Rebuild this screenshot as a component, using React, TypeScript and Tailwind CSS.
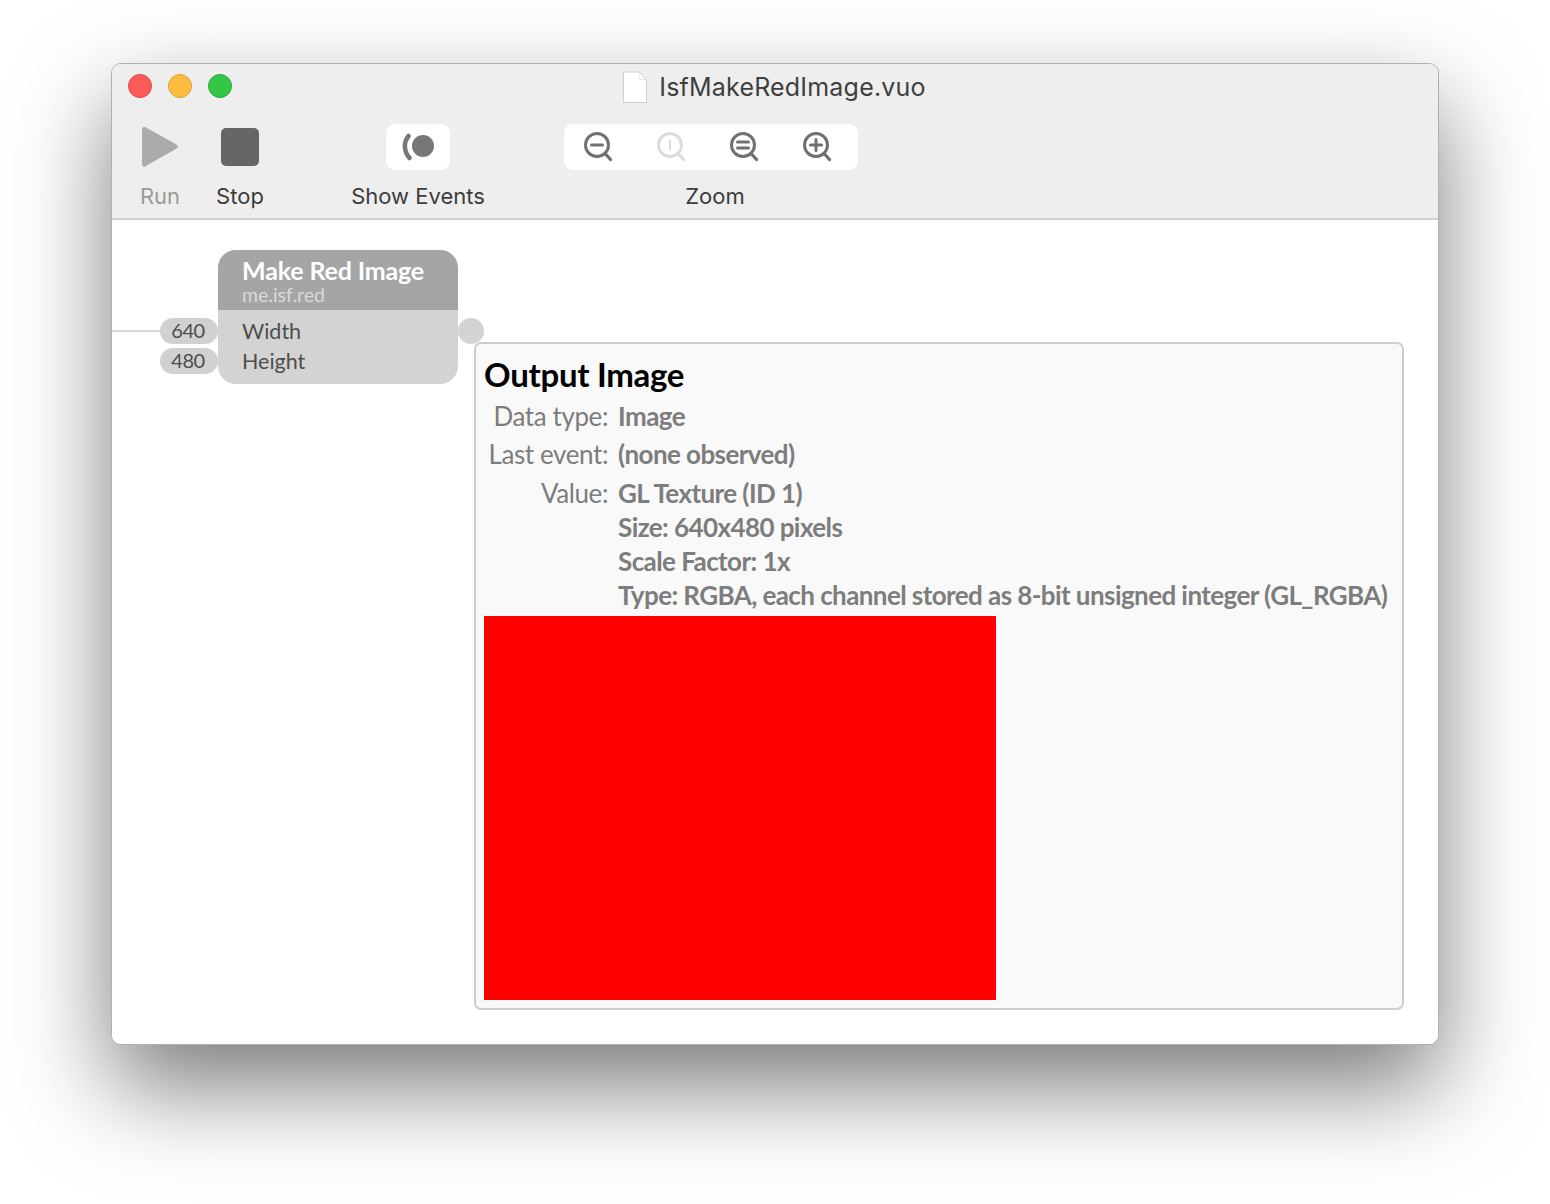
const PT = "font-['Lato','Noto_Sans',sans-serif]";

function Mag({ children, color = "#707070" }: { children?: React.ReactNode; color?: string }) {
  return (
    <svg width="32" height="34" viewBox="0 0 32 34" fill="none" stroke={color} strokeWidth="3" strokeLinecap="round">
      <circle cx="14" cy="14" r="11.5" />
      <path d="M23 23.5 L27.5 28.5" strokeWidth="3.2" />
      {children}
    </svg>
  );
}

function ToolItem({ w, label, dim, children, labelClass = "" }: { w: string; label: string; dim?: boolean; children: React.ReactNode; labelClass?: string }) {
  return (
    <div className={`flex flex-col items-center ${w}`}>
      <div className="h-[46px] w-full flex items-center justify-center">{children}</div>
      <div className={`mt-[13px] text-[22px] leading-[26px] whitespace-nowrap ${dim ? "text-[#9a9a9a]" : "text-[#3c3c3c]"} ${labelClass}`}>{label}</div>
    </div>
  );
}

function InfoRow({ label, children, h }: { label?: string; children: React.ReactNode; h: string }) {
  return (
    <div className={`flex items-center ${h} text-[26px] text-[#7d7d7d]`}>
      <div className="w-[124px] text-right whitespace-nowrap tracking-[-0.4px]">{label}</div>
      <div className="ml-[10px] font-bold whitespace-nowrap tracking-[-0.58px]">{children}</div>
    </div>
  );
}

export default function App() {
  return (
    <div className="min-h-[1204px] bg-white pt-[63px] pl-[111px] overflow-hidden font-['Inter','Roboto',sans-serif]">
      <div className="w-[1328px] h-[982px] rounded-[10px] border border-[#b0b0b0] bg-white overflow-hidden shadow-[0_42px_96px_rgba(0,0,0,0.52)] flex flex-col">
        <header className="h-[156px] shrink-0 bg-[#eeeeee] border-b-2 border-[#d2d2d2]">
          <div className="relative h-[45px] flex items-center justify-center">
            <div className="absolute left-[16px] top-[10px] flex gap-4">
              <span className="w-6 h-6 rounded-full bg-[#fc5b57] border border-[#e14640]" />
              <span className="w-6 h-6 rounded-full bg-[#fdbc40] border border-[#e0a030]" />
              <span className="w-6 h-6 rounded-full bg-[#33c748] border border-[#27aa35]" />
            </div>
            <div className="flex items-center gap-3 mr-[1px] mt-[1px]">
              <svg width="24" height="32" viewBox="0 0 24 32">
                <path d="M0.5 1 H16 L23.5 8.5 V31.5 H0.5 Z" fill="#ffffff" stroke="#cfcfcf" />
                <path d="M16 1 V8.5 H23.5" fill="none" stroke="#e6e6e6" />
              </svg>
              <span className="text-[25px] leading-[32px] text-[#3f3f3f] tracking-[0.2px]">IsfMakeRedImage.vuo</span>
            </div>
          </div>
          <div className="flex pl-[12px] pt-[15px] gap-2">
            <ToolItem w="w-[72px]" label="Run" dim>
              <svg width="40" height="44" viewBox="0 0 40 44">
                <path d="M5 2.5 L36.5 20 Q38.5 21.5 36.5 23 L5 41 Q2.5 42 2.5 39.5 V4.5 Q2.5 1.5 5 2.5 Z" fill="#ababab" stroke="#ababab" strokeLinejoin="round" />
              </svg>
            </ToolItem>
            <ToolItem w="w-[72px]" label="Stop">
              <div className="w-[38px] h-[38px] rounded-[5px] bg-[#666666]" />
            </ToolItem>
            <ToolItem w="w-[156px] ml-[56px]" label="Show Events">
              <div className="w-16 h-[46px] rounded-[9px] bg-white flex items-center justify-center">
                <svg width="34" height="28" viewBox="0 0 34 28">
                  <circle cx="22" cy="13" r="11" fill="#777777" />
                  <path d="M7.5 3 C2.5 9 2.5 18 8.5 25" fill="none" stroke="#777777" strokeWidth="4.5" strokeLinecap="round" />
                </svg>
              </div>
            </ToolItem>
            <ToolItem w="w-[294px] ml-[60px]" label="Zoom" labelClass="ml-2">
              <div className="w-full h-[46px] rounded-[9px] bg-white flex items-center pl-[19px] gap-[41px] pt-[1px]">
                <Mag><path d="M8.5 14 H19.5" /></Mag>
                <Mag color="#dcdcdc"><path d="M14 9.5 V18.5" strokeWidth="2" /></Mag>
                <Mag><path d="M8.5 11 H19.5 M8.5 17 H19.5" /></Mag>
                <Mag><path d="M8.5 14 H19.5 M14 8.5 V19.5" /></Mag>
              </div>
            </ToolItem>
          </div>
        </header>

        <main className={`relative flex-1 bg-white ${PT}`}>
          <div className="absolute left-0 top-[110px] w-[50px] h-[2px] bg-[#d6d6d6]" />
          <div className="absolute left-[48px] top-[98px] flex flex-col gap-1 text-[20px] tracking-[-0.4px] text-[#4d4d4d]">
            <div className="w-[58px] h-[26px] rounded-full bg-[#d1d1d1] flex items-center justify-center pr-[2px] pb-[2px]">640</div>
            <div className="w-[58px] h-[26px] rounded-full bg-[#d1d1d1] flex items-center justify-center pr-[2px] pb-[2px]">480</div>
          </div>
          <div className="absolute left-[106px] top-[30px] w-[240px] h-[134px] rounded-[18px] bg-[#d3d3d3] overflow-hidden">
            <div className="h-[60px] bg-[#a5a5a5] pl-6 pt-[5px] flex flex-col">
              <div className="text-[25px] leading-[30px] font-bold text-white whitespace-nowrap tracking-[-0.15px]">Make Red Image</div>
              <div className="text-[19.5px] leading-[19px] text-[#d9d9d9] whitespace-nowrap">me.isf.red</div>
            </div>
            <div className="pl-6 pt-[6px] text-[21.5px] text-[#4d4d4d] leading-[30px]">
              <div>Width</div>
              <div>Height</div>
            </div>
          </div>
          <div className="absolute left-[346px] top-[98px] w-[26px] h-[26px] rounded-full bg-[#d3d3d3]" />
          <section className="absolute left-[362px] top-[122px] w-[930px] h-[668px] rounded-[7px] border-2 border-[#cdcdcd] bg-[#f9f9f9] pl-[8px] pt-[10px]">
            <h2 className="text-[33px] leading-[40px] font-bold text-black whitespace-nowrap tracking-[-0.3px]">Output Image</h2>
            <div className="mt-[3px] mb-[4px]">
              <InfoRow label="Data type:" h="h-[38px]">Image</InfoRow>
              <InfoRow label="Last event:" h="h-[38px]">(none observed)</InfoRow>
              <InfoRow label="Value:" h="h-[37px] pt-[3px]">GL Texture (ID 1)</InfoRow>
              <InfoRow h="h-[34px]">Size: 640x480 pixels</InfoRow>
              <InfoRow h="h-[34px]">Scale Factor: 1x</InfoRow>
              <InfoRow h="h-[34px]">Type: RGBA, each channel stored as 8-bit unsigned integer (GL_RGBA)</InfoRow>
            </div>
            <div className="w-[512px] h-[384px] bg-[#ff0000]" />
          </section>
        </main>
      </div>
    </div>
  );
}
